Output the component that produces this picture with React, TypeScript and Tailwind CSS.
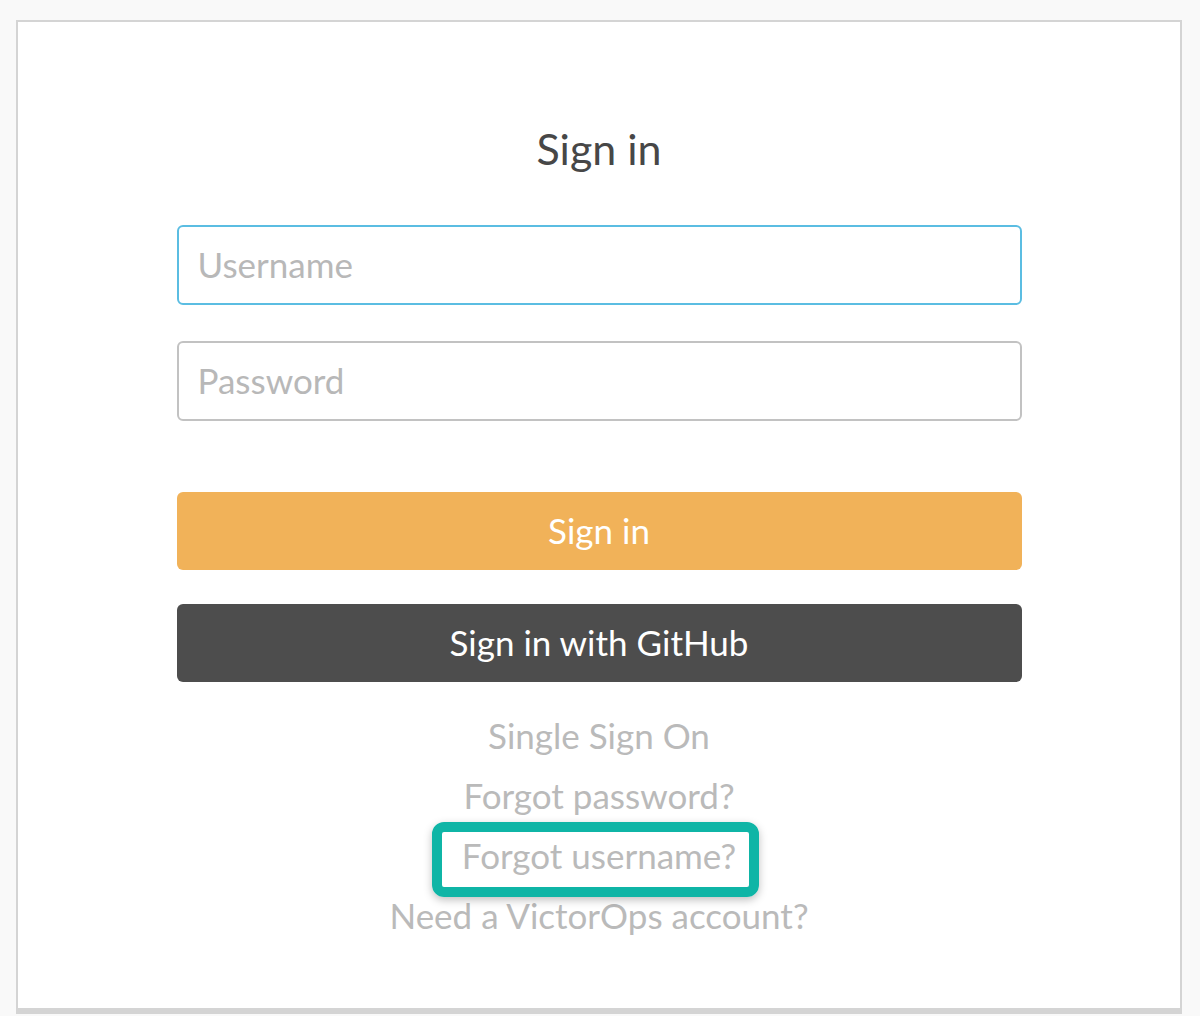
import React from 'react';

const font = { fontFamily: 'Lato, "Open Sans", sans-serif' };

export default function App() {
  return (
    <div className="min-h-[1016px] bg-[#f9f9f9] pt-[20px] pl-[16px] pr-[18px]" style={font}>
      <div className="h-[994px] bg-white border-2 border-b-[6px] border-[#d4d4d4] flex flex-col items-center">
        {/* Title */}
        <h1 className="mt-[105px] text-[43px] leading-none text-[#474747]">Sign in</h1>

        <form className="mt-[55px] w-[845px] flex flex-col" onSubmit={(e) => e.preventDefault()}>
          <input
            type="text"
            placeholder="Username"
            className="h-[80px] rounded-md border-2 border-[#5bbde2] px-[19px] pb-[3px] text-[35px] text-[#444] placeholder:text-[#b8b8b8] outline-none"
          />
          <input
            type="password"
            placeholder="Password"
            className="mt-[36px] h-[80px] rounded-md border-2 border-[#c2c2c2] px-[19px] pb-[3px] text-[35px] text-[#444] placeholder:text-[#b8b8b8] outline-none"
          />

          <button className="mt-[71px] h-[78px] rounded-md bg-[#f1b259] text-white text-[35px] pb-[2px]">
            Sign in
          </button>
          <button className="mt-[34px] h-[78px] rounded-md bg-[#4d4d4d] text-white text-[35px] pb-[2px]">
            Sign in with GitHub
          </button>
        </form>

        {/* Links */}
        <div className="mt-[23px] flex flex-col items-center text-[35px] leading-[60px] text-[#bababa]">
          <a>Single Sign On</a>
          <a>Forgot password?</a>
          <span className="relative inline-block">
            <span className="absolute -left-[30px] -right-[23px] -top-[3px] -bottom-[12px] rounded-[12px] border-[10px] border-[#0fb5a6] shadow-[0_3px_8px_rgba(0,0,0,0.25)]" />
            <a className="relative">Forgot username?</a>
          </span>
          <a>Need a VictorOps account?</a>
        </div>
      </div>
    </div>
  );
}
